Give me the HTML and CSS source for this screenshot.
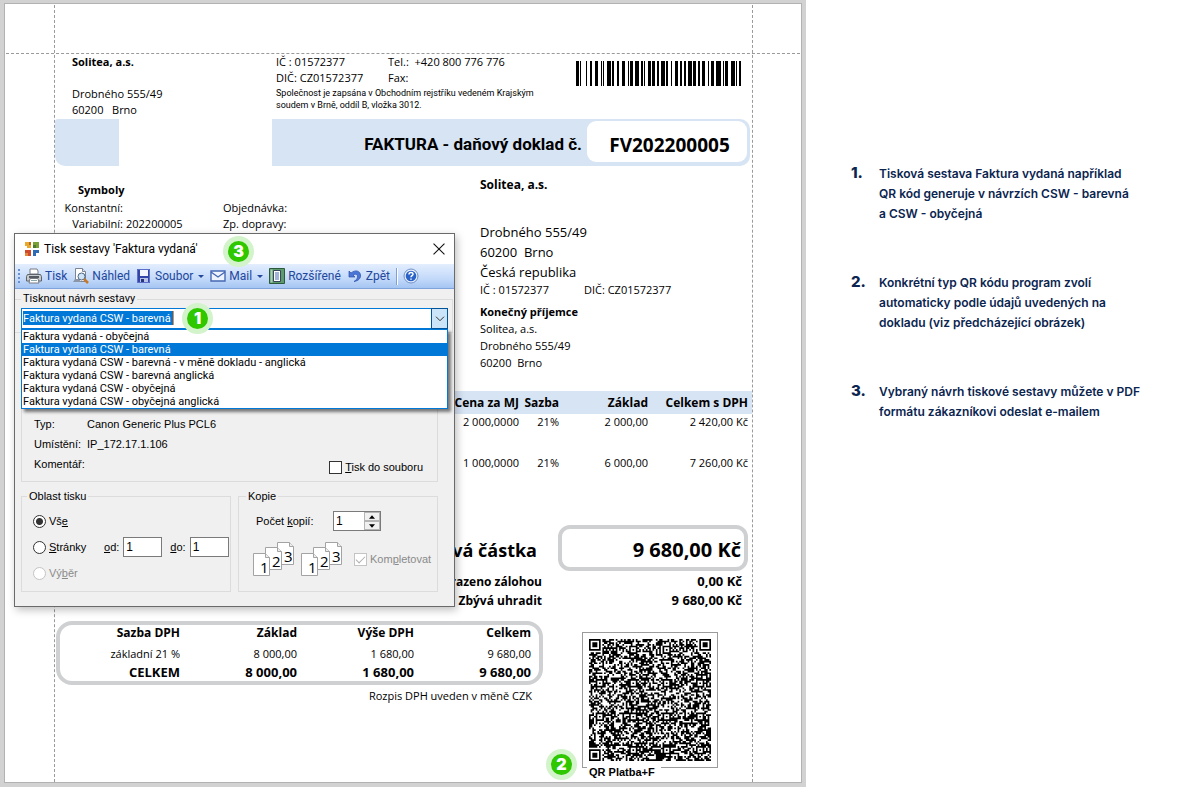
FILE: index.html
```html
<!DOCTYPE html>
<html lang="cs">
<head>
<meta charset="utf-8">
<title>Tisk sestavy Faktura vydaná</title>
<link rel="stylesheet" href="styles.css">
</head>
<body>
<div class="page">
  <section class="desk">
    <div class="sheet">
      <span class="guide guide-top"></span>
      <span class="guide guide-left"></span>
      <span class="guide guide-right"></span>

      <header class="head">
        <div class="supplier">
          <strong>Solitea, a.s.</strong>
          <p class="address">Drobného 555/49<br>60200 &nbsp; Brno</p>
        </div>
        <div class="registry">
          <div class="ids">
            <span>IČ : 01572377</span><span>Tel.: &nbsp;+420 800 776 776</span>
            <span>DIČ: CZ01572377</span><span>Fax:</span>
          </div>
          <p class="court">Společnost je zapsána v Obchodním rejstříku vedeném Krajským<br>soudem v Brně, oddíl B, vložka 3012.</p>
        </div>
        <svg class="barcode" viewBox="0 0 165 25" shape-rendering="crispEdges" aria-label="Čárový kód"><path d="M0 0h3v25h-3zM4 0h1v25h-1zM10 0h1v25h-1zM14 0h2v25h-2zM19 0h3v25h-3zM25 0h1v25h-1zM27 0h1v25h-1zM31 0h4v25h-4zM36 0h2v25h-2zM41 0h2v25h-2zM46 0h3v25h-3zM52 0h1v25h-1zM54 0h3v25h-3zM59 0h4v25h-4zM65 0h2v25h-2zM68 0h1v25h-1zM72 0h3v25h-3zM76 0h3v25h-3zM81 0h2v25h-2zM85 0h4v25h-4zM90 0h2v25h-2zM95 0h1v25h-1zM99 0h3v25h-3zM104 0h2v25h-2zM108 0h2v25h-2zM112 0h4v25h-4zM117 0h3v25h-3zM122 0h2v25h-2zM126 0h3v25h-3zM132 0h1v25h-1zM135 0h3v25h-3zM140 0h5v25h-5zM147 0h1v25h-1zM149 0h3v25h-3zM155 0h4v25h-4zM160 0h1v25h-1zM163 0h2v25h-2z"/></svg>
      </header>

      <div class="title-bar">
        <div class="title-stub"></div>
        <div class="title-main">
          <h1 class="doc-title">FAKTURA - daňový doklad č.</h1>
          <div class="doc-number">FV202200005</div>
        </div>
      </div>

      <div class="parties">
        <div class="symbols">
          <h2 class="symbols-title">Symboly</h2>
          <div class="symbols-grid">
            <span class="key">Konstantní:</span><span></span><span>Objednávka:</span>
            <span class="key">Variabilní:</span><span>202200005</span><span>Zp. dopravy:</span>
          </div>
        </div>
        <div class="customer">
          <strong class="customer-name">Solitea, a.s.</strong>
          <p class="customer-address">Drobného 555/49<br>60200 &nbsp;Brno<br>Česká republika</p>
          <div class="customer-ids"><span>IČ : 01572377</span><span>DIČ: CZ01572377</span></div>
          <strong class="recipient-title">Konečný příjemce</strong>
          <p class="recipient">Solitea, a.s.<br>Drobného 555/49<br>60200 &nbsp;Brno</p>
        </div>
      </div>

      <table class="items">
        <thead>
          <tr><th class="col-name"></th><th class="col-price">Cena za MJ</th><th class="col-rate">Sazba</th><th class="col-base">Základ</th><th class="col-total">Celkem s DPH</th></tr>
        </thead>
        <tbody>
          <tr><td></td><td>2 000,0000</td><td>21%</td><td>2 000,00</td><td>2 420,00 Kč</td></tr>
          <tr><td></td><td>1 000,0000</td><td>21%</td><td>6 000,00</td><td>7 260,00 Kč</td></tr>
        </tbody>
      </table>

      <div class="totals">
        <span class="grand-label">Celková částka</span><span class="grand-value">9 680,00 Kč</span>
        <span class="sub-label">Uhrazeno zálohou</span><span class="sub-value">0,00 Kč</span>
        <span class="sub-label">Zbývá uhradit</span><span class="sub-value">9 680,00 Kč</span>
      </div>

      <div class="foot">
        <div class="vat">
          <div class="vat-box">
            <table class="vat-table">
              <thead><tr><th>Sazba DPH</th><th>Základ</th><th>Výše DPH</th><th>Celkem</th></tr></thead>
              <tbody><tr><td>základní 21 %</td><td>8 000,00</td><td>1 680,00</td><td>9 680,00</td></tr></tbody>
              <tfoot><tr><th>CELKEM</th><th>8 000,00</th><th>1 680,00</th><th>9 680,00</th></tr></tfoot>
            </table>
          </div>
          <p class="vat-note">Rozpis DPH uveden v měně CZK</p>
        </div>
        <figure class="qr">
          <svg class="qr-code" id="qr" viewBox="0 0 73 73" aria-label="QR kód"></svg>
          <figcaption class="qr-caption">QR Platba+F</figcaption>
          <span class="badge badge-qr">2</span>
        </figure>
      </div>
    </div>

    <form class="dialog">
      <div class="dialog-title">
        <svg class="app-icon" viewBox="0 0 16 16"><path d="M1 1h4v3h2v3H3V5H1z" fill="#e9a92c"/><path d="M9 1h6v6h-3V4H9z" fill="#7a9f35"/><path d="M1 9h6v6H4v-3H1z" fill="#cf4a2a"/><path d="M9 9h6v3h-3v3H9z" fill="#2f6cb5"/><path d="M5 1h2v3H5z" fill="#b86a1c"/><path d="M9 4h3v3H9z" fill="#4d7a2b"/><path d="M1 12h3v3H1z" fill="#e58a3c"/></svg>
        <span>Tisk sestavy 'Faktura vydaná'</span>
        <button class="close" type="button" aria-label="Zavřít"><svg viewBox="0 0 11 11"><path d="M.5.5l10 10M10.5.5l-10 10" fill="none" stroke="#111"/></svg></button>
        <span class="badge badge-title">3</span>
      </div>

      <div class="toolbar">
        <svg class="grip" viewBox="0 0 3 16"><path d="M0 1h2v2H0zM0 5h2v2H0zM0 9h2v2H0zM0 13h2v2H0z" fill="#6a8fcf"/></svg>
        <button class="tool" type="button"><svg viewBox="0 0 16 16"><path d="M4 1h7l1 2v3H4z" fill="#fff" stroke="#777b83"/><path d="M1.500 6.500h13l1 2v4.500h-15V8.500z" fill="#c6c9ce" stroke="#5d626b"/><path d="M3 8h10v2H3z" fill="#555a62"/><path d="M4 10.500h8l1 4.500H3z" fill="#fff" stroke="#777b83"/><path d="M5 12.500h6" stroke="#8aa"/></svg>Tisk</button>
        <button class="tool" type="button"><svg viewBox="0 0 16 16"><path d="M2.500.5h7l3 3v10h-10z" fill="#fff" stroke="#7c8594"/><path d="M9.500.5v3h3" fill="#dde5f0" stroke="#7c8594"/><path d="M0 14h8l-2-3H2z" fill="#8b95a5"/><circle cx="8.500" cy="8.500" r="3.500" fill="#cfe5f7" stroke="#4f6785"/><path d="M11 11l4 4" stroke="#c6782a" stroke-width="2.500"/></svg>Náhled</button>
        <button class="tool" type="button"><svg viewBox="0 0 16 16"><path d="M1 1h13v14H2l-1-1z" fill="#3346a8"/><path d="M4 1h8v7H4z" fill="#f3f6ff"/><path d="M4 10h8v5H4z" fill="#b9c3e8"/><path d="M5 11h3v4H5z" fill="#26347f"/><path d="M1.500 1.500h12v13h-12z" fill="none" stroke="#5e6fc9"/></svg>Soubor<i class="caret"></i></button>
        <button class="tool" type="button"><svg viewBox="0 0 16 16"><path d="M1 3h14v10H1z" fill="#eef4ff" stroke="#4668b4" stroke-width="1.400"/><path d="M1 4l7 5 7-5" fill="none" stroke="#4668b4" stroke-width="1.400"/></svg>Mail<i class="caret"></i></button>
        <button class="tool" type="button"><svg viewBox="0 0 16 16"><path d="M.5.5h15v15H.5z" fill="#5d9a6d" stroke="#2c5a3c"/><path d="M1.500 1.500h2v13h-2z" fill="#a9d0b3"/><path d="M4.500 2.500h7v11h-7z" fill="#fff" stroke="#38465c"/><path d="M6 5h4M6 7h4M6 9h4M6 11h4" stroke="#4668b4"/></svg>Rozšířené</button>
        <button class="tool" type="button"><svg viewBox="0 0 16 16"><path d="M2 3v6h6L6 7c2.500-1.500 5-.5 4.500 2-.3 2-1.500 3.300-3.500 4.500 4.500-.5 7-3.500 6.500-6.500C13 2.500 8 1.500 4 5z" fill="#4a76d8" stroke="#2e50a8" stroke-width=".7"/></svg>Zpět</button>
        <span class="divider"></span>
        <button class="tool" type="button" aria-label="Nápověda"><svg viewBox="0 0 16 16"><circle cx="8" cy="8" r="7" fill="#e8f0fd" stroke="#6f8fc8"/><circle cx="8" cy="8" r="5.300" fill="#2c63c8"/><path d="M6 6.500c0-2.800 4-2.600 4-.3 0 1.500-2 1.500-2 3.100M8 10.500v1.300" fill="none" stroke="#fff" stroke-width="1.500"/></svg></button>
      </div>

      <fieldset class="group design">
        <legend>Tisknout návrh sestavy</legend>
        <div class="combo">
          <input class="combo-text" type="text" value="Faktura vydaná CSW - barevná" aria-label="Tisknout návrh sestavy">
          <button class="combo-button" type="button" aria-label="Rozbalit"><svg viewBox="0 0 10 6"><path d="M1 .7l4 4 4-4" fill="none" stroke="#333"/></svg></button>
          <span class="badge badge-combo">1</span>
          <ul class="list" role="listbox" aria-label="Návrhy sestav">
            <li role="option">Faktura vydaná - obyčejná</li>
            <li role="option" class="active" aria-selected="true">Faktura vydaná CSW - barevná</li>
            <li role="option">Faktura vydaná CSW - barevná - v měně dokladu - anglická</li>
            <li role="option">Faktura vydaná CSW - barevná anglická</li>
            <li role="option">Faktura vydaná CSW - obyčejná</li>
            <li role="option">Faktura vydaná CSW - obyčejná anglická</li>
          </ul>
        </div>
      </fieldset>

      <div class="printer">
        <dl class="printer-info">
          <dt>Typ:</dt><dd>Canon Generic Plus PCL6</dd>
          <dt>Umístění:</dt><dd>IP_172.17.1.106</dd>
          <dt>Komentář:</dt><dd></dd>
        </dl>
        <label class="choice to-file"><input class="check" type="checkbox"><span><u>T</u>isk do souboru</span></label>
      </div>

      <div class="options">
        <fieldset class="group range">
          <legend>Oblast tisku</legend>
          <div class="row"><label class="choice"><input class="radio" type="radio" name="range" checked><span>Vš<u>e</u></span></label></div>
          <div class="row">
            <label class="choice pages"><input class="radio" type="radio" name="range"><span><u>S</u>tránky</span></label>
            <label class="from-to"><span><u>o</u>d:</span><input class="number" type="text" value="1"></label>
            <label class="from-to"><span><u>d</u>o:</span><input class="number" type="text" value="1"></label>
          </div>
          <div class="row"><label class="choice disabled"><input class="radio" type="radio" name="range" disabled><span>Vý<u>b</u>ěr</span></label></div>
        </fieldset>
        <fieldset class="group copies">
          <legend>Kopie</legend>
          <div class="row">
            <label class="count-label" for="count">Počet <u>k</u>opií:</label>
            <div class="spinner">
              <input class="spinner-text" id="count" type="text" value="1">
              <div class="spinner-buttons">
                <button type="button" aria-label="Více"><svg viewBox="0 0 7 4"><path d="M0 4h7L3.500 0z"/></svg></button>
                <button type="button" aria-label="Méně"><svg viewBox="0 0 7 4"><path d="M0 0h7L3.500 4z"/></svg></button>
              </div>
            </div>
          </div>
          <div class="collate">
            <svg class="stack" viewBox="0 0 44 36"><use href="#stack-pages"/></svg>
            <svg class="stack" viewBox="0 0 44 36">
              <g id="stack-pages">
                <g fill="#fff" stroke="#a3a3a3"><path d="M25.500 1.500h12l4 4v18h-16z"/><path d="M13.500 6.500h12l4 4v18h-16z"/><path d="M1.500 12.500h12l4 4v18h-16z"/></g>
                <g fill="#eee" stroke="#a3a3a3"><path d="M37.500 1.500v4h4M25.500 6.500v4h4M13.500 12.500v4h4"/></g>
                <g class="stack-digits"><text x="8" y="32">1</text><text x="20" y="26">2</text><text x="32" y="21">3</text></g>
              </g>
            </svg>
            <label class="choice disabled"><input class="check" type="checkbox" checked disabled><span>Kom<u>p</u>letovat</span></label>
          </div>
        </fieldset>
      </div>
    </form>
  </section>

  <ol class="notes">
    <li><span class="num">1.</span><p>Tisková sestava Faktura vydaná například<br>QR kód generuje v návrzích CSW - barevná<br>a CSW - obyčejná</p></li>
    <li><span class="num">2.</span><p>Konkrétní typ QR kódu program zvolí<br>automaticky podle údajů uvedených na<br>dokladu (viz předcházející obrázek)</p></li>
    <li><span class="num">3.</span><p>Vybraný návrh tiskové sestavy můžete v PDF<br>formátu zákazníkovi odeslat e-mailem</p></li>
  </ol>
</div>
<script src="qr.js"></script>
</body>
</html>
```
FILE: styles.css
```css
* { box-sizing: border-box; }

body {
  margin: 0;
  background: #fff;
  color: #000;
  font: 11px/16px "Open Sans", "Noto Sans", sans-serif;
}

p, h1, h2, ol, ul, dl, dd, figure { margin: 0; padding: 0; }
ol, ul { list-style: none; }
button, input { font: inherit; color: inherit; }
table { border-collapse: collapse; table-layout: fixed; width: 100%; }
th, td { padding: 0; text-align: right; white-space: nowrap; }

.page {
  display: grid;
  grid-template-columns: 806fr 394fr;
  min-height: 100vh;
}

/* Invoice sheet */
.desk {
  position: relative;
  display: flex;
  padding: 3px 4px 4px 4px;
  background: #d2d2d2;
}

.sheet {
  position: relative;
  flex: 1;
  padding: 50px 49px 0 50px;
  background: #fff;
  border: 1px solid #b2b2b2;
}

.guide { position: absolute; border: 0 dashed #9a9a9a; }
.guide-top { top: 49px; left: 1px; right: 1px; border-top-width: 1px; }
.guide-left { top: 1px; bottom: 0; left: 49px; border-left-width: 1px; }
.guide-right { top: 1px; bottom: 0; right: 48px; border-left-width: 1px; }

.head {
  display: grid;
  grid-template-columns: 204px 300px 165px;
  padding-left: 17px;
  height: 65px;
}
.supplier strong { font-size: 11px; }
.address { padding-top: 16px; }
.ids { display: grid; grid-template-columns: 112px 1fr; white-space: nowrap; }
.court { padding-top: 1px; font: 9px/12px "Roboto", sans-serif; white-space: nowrap; }
.barcode { width: 165px; height: 25px; margin-top: 7px; }

.title-bar { display: flex; justify-content: space-between; width: 695px; height: 47px; }
.title-stub { width: 64px; background: #d7e4f4; border-radius: 3px 0 0 10px; }
.title-main {
  display: flex;
  align-items: center;
  justify-content: flex-end;
  gap: 5px;
  width: 478px;
  padding: 0 3px 3px 0;
  background: #d7e4f4;
  border-radius: 0 10px 10px 0;
}
.doc-title { padding-top: 6px; font: bold 17px/24px "Liberation Sans Narrow", "Roboto", sans-serif; white-space: nowrap; }
.doc-number {
  width: 160px;
  padding: 7px 0 0 5px;
  border-radius: 9px;
  background: #fff;
  font-size: 19px;
  font-weight: bold;
  line-height: 34px;
  text-align: center;
}

.parties { display: flex; height: 225px; }
.symbols { width: 425px; padding: 16px 0 0 9px; }
.symbols-title { padding: 0 0 2px 14px; font-size: 11px; line-height: 16px; }
.symbols-grid { display: grid; grid-template-columns: 59px 94px auto; column-gap: 3px; white-space: nowrap; }
.key { justify-self: end; }
.customer { padding-top: 9px; }
.customer-name { display: block; font-size: 12px; line-height: 20px; }
.customer-address { padding-top: 27px; font-size: 13px; line-height: 20px; }
.customer-ids { display: flex; gap: 35px; }
.recipient-title { display: block; padding-top: 6px; }
.recipient { line-height: 17px; }

.items { width: 697px; }
.items th { height: 23px; background: #d7e4f4; font-size: 12px; }
.items tr { height: 41px; }
.items thead tr { height: 23px; }
.items td { vertical-align: top; }
.items .col-price { width: 70px; }
.items .col-rate { width: 40px; }
.items .col-base { width: 89px; }
.items .col-total { width: 104px; }
.items th:last-child, .items td:last-child { padding-right: 4px; }

.totals {
  display: grid;
  grid-template-columns: 488px 199px;
  margin-top: 29px;
  font-size: 12px;
  font-weight: bold;
  line-height: 19px;
  text-align: right;
}
.grand-label { padding: 0 6px 0 0; font-size: 18px; line-height: 50px; height: 47px; }
.grand-value {
  justify-self: end;
  width: 190px;
  height: 46px;
  margin-right: -6px;
  padding-right: 3px;
  border: 4px solid #cfd0d2;
  border-radius: 12px;
  font-size: 20px;
  line-height: 42px;
}
.sub-label { padding-right: 1px; }
.sub-value { font-size: 13px; }

.foot { display: flex; gap: 39px; padding: 11px 0 13px 1px; }
.vat { width: 487px; }
.vat-box { height: 64px; padding: 1px 8px 0 0; border: 4px solid #cfd0d2; border-radius: 16px; }
.vat-table th { font-size: 12px; line-height: 14px; }
.vat-table td { line-height: 18px; padding-top: 5px; }
.vat-table tfoot th { font-size: 13px; line-height: 18px; }
.vat-table th:first-child, .vat-table td:first-child { width: 120px; }
.vat-note { padding: 3px 11px 0 0; text-align: right; }

.qr { position: relative; width: 136px; height: 136px; margin-top: 11px; padding: 6px; border: 1px solid #9b9b9b; }
.qr-code { display: block; width: 122px; height: 122px; }
.qr-caption {
  width: 74px;
  margin-left: -2px;
  padding: 4px 0 0 2px;
  background: #fff;
  font: bold 11px/14px "Liberation Sans", sans-serif;
  white-space: nowrap;
}

/* Numbered green markers */
.badge {
  position: absolute;
  width: 31px;
  height: 31px;
  border: 5px solid #d3f3cb;
  border-radius: 50%;
  background: #2fc800;
  color: #fff;
  font: 900 16px/21px "Inter", sans-serif;
  text-align: center;
}
.badge-qr { left: -37px; bottom: -13px; }
.badge-title { left: 208px; top: 2px; }
.badge-combo { left: 160px; top: -6px; z-index: 3; }

/* Print dialog */
.dialog {
  position: absolute;
  left: 14px;
  top: 233px;
  width: 441px;
  padding-bottom: 14px;
  border: 1px solid #6a6a6a;
  background: #f0f0f0;
  box-shadow: 2px 3px 8px rgba(0, 0, 0, .25);
  font: 11px/14px "Liberation Sans", sans-serif;
}
.dialog-title {
  position: relative;
  display: flex;
  align-items: center;
  gap: 4px;
  height: 30px;
  padding: 0 9px;
  background: #fff;
  font: 12px/16px "Roboto", sans-serif;
}
.app-icon { width: 16px; height: 16px; }
.close { display: flex; margin-left: auto; padding: 0; border: 0; background: none; }
.close svg { width: 12px; height: 12px; }

.toolbar {
  display: flex;
  align-items: center;
  height: 25px;
  padding-left: 3px;
  background: linear-gradient(#e3eefe, #c4dafa 60%, #a5c5f2);
  border-bottom: 1px solid #7ea3dd;
  color: #23479b;
  font: 12px/16px "Roboto", sans-serif;
}
.grip { width: 3px; height: 16px; margin-right: 5px; }
.tool { display: flex; align-items: center; gap: 3px; margin-right: 6px; padding: 0; border: 0; background: none; white-space: nowrap; }
.tool svg { width: 16px; height: 16px; }
.caret { margin-left: 2px; border: 3px solid transparent; border-top-color: #23479b; border-bottom: 0; }
.divider { width: 2px; height: 17px; margin-right: 5px; border-left: 1px solid #7f9fd6; border-right: 1px solid #fff; }

.group { min-width: 0; margin: 0; padding: 0; border: 1px solid #dcdcdc; }
.group legend { padding: 0 2px; line-height: 14px; }

.design { margin: 3px 1px 0 0; padding: 2px 5px 3px; border-left: 0; font: 11px/13px "Roboto", sans-serif; }
.design legend { margin-left: 1px; }
.combo { position: relative; display: flex; width: 427px; height: 21px; margin-left: 1px; border: 1px solid #0078d7; background: #fff; }
.combo-text {
  width: 151px;
  height: 14px;
  margin: 2px auto 0 1px;
  padding: 0;
  border: 0;
  border-right: 1px solid #ff8728;
  background: #0078d7;
  color: #fff;
}
.combo-button { display: flex; align-items: center; justify-content: center; width: 17px; margin: -1px; padding: 0; border: 1px solid #005499; background: #cce4f7; }
.combo-button svg { width: 10px; height: 6px; }
.list {
  position: absolute;
  z-index: 2;
  top: 20px;
  left: -1px;
  right: -1px;
  border: 1px solid #0078d7;
  background: #fff;
  box-shadow: 3px 3px 3px rgba(0, 0, 0, .5);
}
.list li { padding-left: 1px; white-space: nowrap; }
.list .active { background: #0078d7; color: #fff; }

.printer {
  display: flex;
  justify-content: space-between;
  align-items: flex-end;
  margin: 7px 16px 0 6px;
  padding: 73px 14px 7px 12px;
  border: 1px solid #dcdcdc;
}
.printer-info { display: grid; grid-template-columns: 53px auto; line-height: 20px; }
.choice { display: flex; align-items: center; gap: 3px; }
.disabled { color: #8a8a8a; }

.options { display: grid; grid-template-columns: 210px 200px; gap: 7px; margin: 7px 16px 0 6px; }
.options legend { margin-left: -6px; }
.range { padding: 5px 0 5px 11px; }
.copies { padding: 5px 0 0 13px; }
.row { display: flex; align-items: center; height: 26px; }
.pages { width: 68px; }
.from-to { display: flex; align-items: center; gap: 4px; margin-right: 8px; }
.number { width: 39px; height: 20px; padding: 0 2px; border: 1px solid #7a7a7a; background: #fff; font-size: 12px; }

.radio, .check { flex: none; width: 13px; height: 13px; margin: 0; appearance: none; border: 1px solid #333; background: #fff; }
.radio { border-radius: 50%; }
.radio:checked { background: radial-gradient(circle, #333 0 3px, #fff 4px); }
.radio:disabled, .check:disabled { border-color: #c4c4c4; }
.check:checked { position: relative; }
.check:checked::after { content: ""; position: absolute; left: 3px; top: 0; width: 4px; height: 8px; border: solid #b0b0b0; border-width: 0 1px 1px 0; transform: rotate(45deg); }

.pages { flex: none; width: 71px; }
.count-label { width: 81px; padding-left: 4px; white-space: nowrap; }
.spinner { display: flex; width: 48px; height: 20px; border: 1px solid #7a7a7a; background: #fff; }
.spinner-text { width: 30px; padding: 0 2px; border: 0; background: none; font-size: 12px; }
.spinner-buttons { display: grid; grid-template-rows: 9px 9px; width: 16px; background: #f0f0f0; }
.spinner-buttons button { display: flex; align-items: center; justify-content: center; padding: 0; border: 1px solid #b4b4b4; background: #f0f0f0; }
.spinner-buttons svg { width: 6px; height: 4px; }
.collate { display: flex; align-items: center; gap: 4px; padding-top: 7px; }
.stack { width: 44px; height: 36px; }
.collate .choice { margin-left: 6px; }
.stack-digits { font: 15px "Open Sans", sans-serif; }

/* Explanatory notes */
.notes {
  display: flex;
  flex-direction: column;
  gap: 49px;
  padding: 164px 0 0 45px;
  color: #0b2550;
  font: 600 12px/20px "Inter", sans-serif;
  white-space: nowrap;
}
.notes li { display: grid; grid-template-columns: 28px 1fr; }
.num { font-size: 15px; font-weight: 800; line-height: 17px; }
```
FILE: qr.js
```javascript
// Draws a 73 × 73 module code: finder and alignment patterns over a data field.
const size = 73;
const centers = [6, 26, 46, 66];
let seed = 20220005;

function next() {
  seed = (seed * 1103515245 + 12345) % 2147483648;
  return seed / 2147483648;
}

function finder(x, y, left, top) {
  const d = Math.max(Math.abs(x - left - 3), Math.abs(y - top - 3));
  return d > 4 ? null : d === 3 || d < 2;
}

function dark(x, y) {
  for (const [left, top] of [[0, 0], [size - 7, 0], [0, size - 7]]) {
    const f = finder(x, y, left, top);
    if (f !== null) return f;
  }
  for (const cx of centers) {
    for (const cy of centers) {
      if ((cx === 6 && cy === 6) || (cx === 66 && cy === 6) || (cx === 6 && cy === 66)) continue;
      const d = Math.max(Math.abs(x - cx), Math.abs(y - cy));
      if (d <= 2) return d !== 1;
    }
  }
  if (x === 6 || y === 6) return (x + y) % 2 === 0;
  return next() < 0.55;
}

let path = "";
for (let y = 0; y < size; y++) {
  for (let x = 0; x < size; x++) {
    if (dark(x, y)) path += `M${x} ${y}h1v1h-1z`;
  }
}
const shape = document.createElementNS("http://www.w3.org/2000/svg", "path");
shape.setAttribute("d", path);
document.getElementById("qr").append(shape);
```
